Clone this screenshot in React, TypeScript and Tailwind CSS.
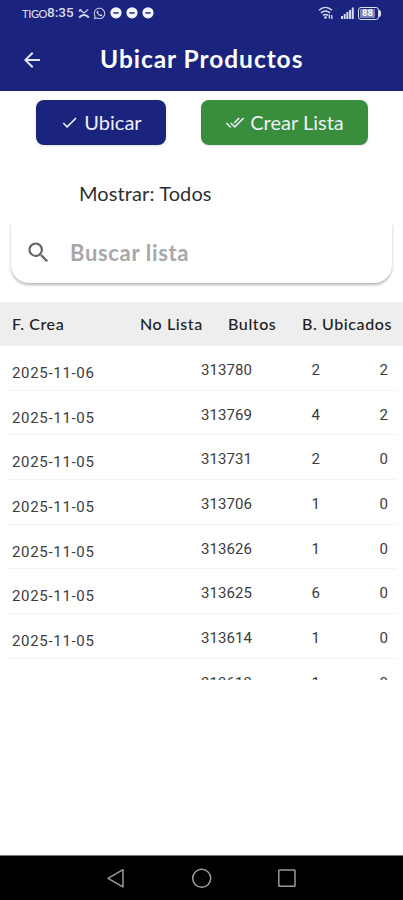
import { MdArrowBack, MdCheck, MdDoneAll, MdSearch } from 'react-icons/md';
import { FaWhatsapp } from 'react-icons/fa';

interface ListRow {
  date: string;
  list: string;
  packages: number;
  placed: number;
}

const rows: ListRow[] = [
  { date: '2025-11-06', list: '313780', packages: 2, placed: 2 },
  { date: '2025-11-05', list: '313769', packages: 4, placed: 2 },
  { date: '2025-11-05', list: '313731', packages: 2, placed: 0 },
  { date: '2025-11-05', list: '313706', packages: 1, placed: 0 },
  { date: '2025-11-05', list: '313626', packages: 1, placed: 0 },
  { date: '2025-11-05', list: '313625', packages: 6, placed: 0 },
  { date: '2025-11-05', list: '313614', packages: 1, placed: 0 },
  { date: '2025-11-05', list: '313613', packages: 1, placed: 0 },
];

function MessengerDot() {
  return (
    <svg viewBox="0 0 12 12" className="h-3 w-3">
      <circle cx="6" cy="5.8" r="5.6" fill="#f3f4fb" />
      <path d="m3.4 6.4 1.6-.7 2 .5 1.6-.7" stroke="#1a237e" strokeWidth="1.3" fill="none" />
    </svg>
  );
}

function StatusBar() {
  return (
    <div className="flex h-[27px] items-center justify-between pb-[1px] pl-[22px] pr-[22px] text-[#d9dbee]">
      <div className="flex items-center">
        <span className="w-[25px] text-[11px] font-medium leading-none tracking-[-0.35px]">TIGO</span>
        <span className="w-[31px] whitespace-nowrap font-[Roboto,sans-serif] text-[13.5px] font-medium leading-none tracking-[0px]">
          8:35
        </span>
        <svg viewBox="0 0 12 11" className="h-[11px] w-3" fill="none" stroke="currentColor">
          <path d="M1.5 1.8 6 5l4.3-3.6M1.5 1.8h2.2M1.5 1.8v2" strokeWidth="1.2" />
          <path d="M1.2 9.6c2.8-3.4 6.8-3.4 9.6 0" strokeWidth="2" />
        </svg>
        <FaWhatsapp className="ml-[3px] h-[13px] w-[13px]" />
        <div className="ml-1 flex gap-[4px]">
          <MessengerDot />
          <MessengerDot />
          <MessengerDot />
        </div>
      </div>
      <div className="flex items-center">
        <svg viewBox="0 0 16 14" className="mr-[7px] h-[14px] w-[16px]" fill="none" stroke="currentColor">
          <path d="M1 4.2c4-3.6 9-3.6 13 0M3 6.8c3-2.5 6-2.5 9 0M5 9.4c1.7-1.3 3.3-1.3 5 0" strokeWidth="1.5" />
          <circle cx="7.5" cy="11.5" r="1.3" fill="currentColor" stroke="none" />
          <path d="M11.3 8.4v4M13.8 9v4" strokeWidth="1.4" />
        </svg>
        <svg viewBox="0 0 13 12" className="mr-[4px] h-3 w-[13px]" fill="currentColor">
          <path d="M0 9h2v3H0zM2.7 7h2v5h-2zM5.4 5h2v7h-2zM8.1 3h2v9h-2zM10.8.5h2V12h-2z" />
        </svg>
        <div className="flex h-[13px] w-[21px] items-center rounded-[3px] border border-[#d9dbee] p-[1px] font-[Roboto,sans-serif] text-[9.5px] font-bold leading-none">
          <span className="flex h-[9px] w-[15px] items-center justify-center rounded-[1px] bg-[#7d82b8] text-white">
            88
          </span>
        </div>
        <div className="h-[7px] w-[2px] rounded-r bg-[#d9dbee]" />
      </div>
    </div>
  );
}

function TableRow({ row }: { row: ListRow }) {
  return (
    <div className="mx-[7px] h-[44.67px] shrink-0 border-b border-[#f3f3f3]">
      <div className="flex pl-[5px] pr-[8px] pt-[14px] font-[Roboto,sans-serif] text-[15px] leading-[20px] text-[#3c3c3c]">
        <span className="w-[130px] pt-[3px] tracking-[0.68px]">{row.date}</span>
        <span className="w-[110px] text-right tracking-[0.05px]">{row.list}</span>
        <span className="w-[68px] text-right">{row.packages}</span>
        <span className="flex-1 text-right">{row.placed}</span>
      </div>
    </div>
  );
}

export default function App() {
  return (
    <div className="flex h-[900px] w-[403px] flex-col overflow-hidden bg-white font-[Lato,sans-serif]">
      <header className="h-[91px] shrink-0 bg-[#1a237e]">
        <StatusBar />
        <div className="flex h-[66px] items-center pl-[20px] text-white">
          <MdArrowBack className="h-6 w-6 text-[#e6e7f5]" />
          <h1 className="ml-[56px] whitespace-nowrap pb-[2px] text-[24.5px] font-bold leading-none tracking-[0.95px]">
            Ubicar Productos
          </h1>
        </div>
      </header>

      {/* Actions */}
      <div className="flex shrink-0 gap-[35px] pl-[36px] pt-[9px] text-[20px] text-[#eef0f8]">
        <button className="flex h-[45px] w-[130px] items-center justify-center gap-[5px] rounded-[8px] bg-[#1a237e] pb-[2px] shadow-sm">
          <MdCheck className="mt-[2px] h-[19px] w-[19px]" />
          <span>Ubicar</span>
        </button>
        <button className="flex h-[45px] w-[167px] items-center justify-center gap-[5px] rounded-[8px] bg-[#388e3c] pb-[2px] shadow-sm">
          <MdDoneAll className="mt-[2px] h-[19px] w-[20px]" />
          <span>Crear Lista</span>
        </button>
      </div>

      <div className="mt-[33px] shrink-0 pl-[79px] text-[20px] leading-[30px] tracking-[0.1px] text-[#303030]">
        Mostrar: Todos
      </div>

      {/* Search, the top part of its shadow is cut off */}
      <div className="mt-[15px] h-[70px] shrink-0 overflow-hidden px-[11px]">
        <div className="flex h-[60px] items-center rounded-b-[18px] bg-white pb-[2px] pl-[14px] shadow-[0_2px_3px_rgba(0,0,0,0.28)]">
          <MdSearch className="h-[27px] w-[27px] text-[#666]" />
          <span className="ml-[18px] text-[22px] font-bold tracking-[0.65px] text-[#a8a8a8]">
            Buscar lista
          </span>
        </div>
      </div>

      <div className="mt-[9px] flex h-[44px] shrink-0 items-center bg-[#eeeeee] pb-[1px] pl-[12px] text-[16px] font-medium tracking-[0.6px] text-[#202020]">
        <span className="w-[128px]">F. Crea</span>
        <span className="w-[88px]">No Lista</span>
        <span className="w-[74px]">Bultos</span>
        <span className="whitespace-nowrap">B. Ubicados</span>
      </div>

      <div className="flex h-[334px] shrink-0 flex-col overflow-hidden">
        {rows.map((row) => (
          <TableRow key={row.list} row={row} />
        ))}
      </div>

      {/* System navigation */}
      <nav className="mt-auto flex h-[45px] shrink-0 items-center border-t border-[#777] bg-black text-[#9b9b9b]">
        <svg viewBox="0 0 403 44" className="h-11 w-[403px]" fill="none" stroke="currentColor" strokeWidth="1.5">
          <path d="M123 13.7v17.2l-15-8.6Z" strokeLinejoin="round" />
          <circle cx="201.7" cy="22.3" r="9" />
          <rect x="278.8" y="14" width="16.2" height="16.2" rx=".8" />
        </svg>
      </nav>
    </div>
  );
}
